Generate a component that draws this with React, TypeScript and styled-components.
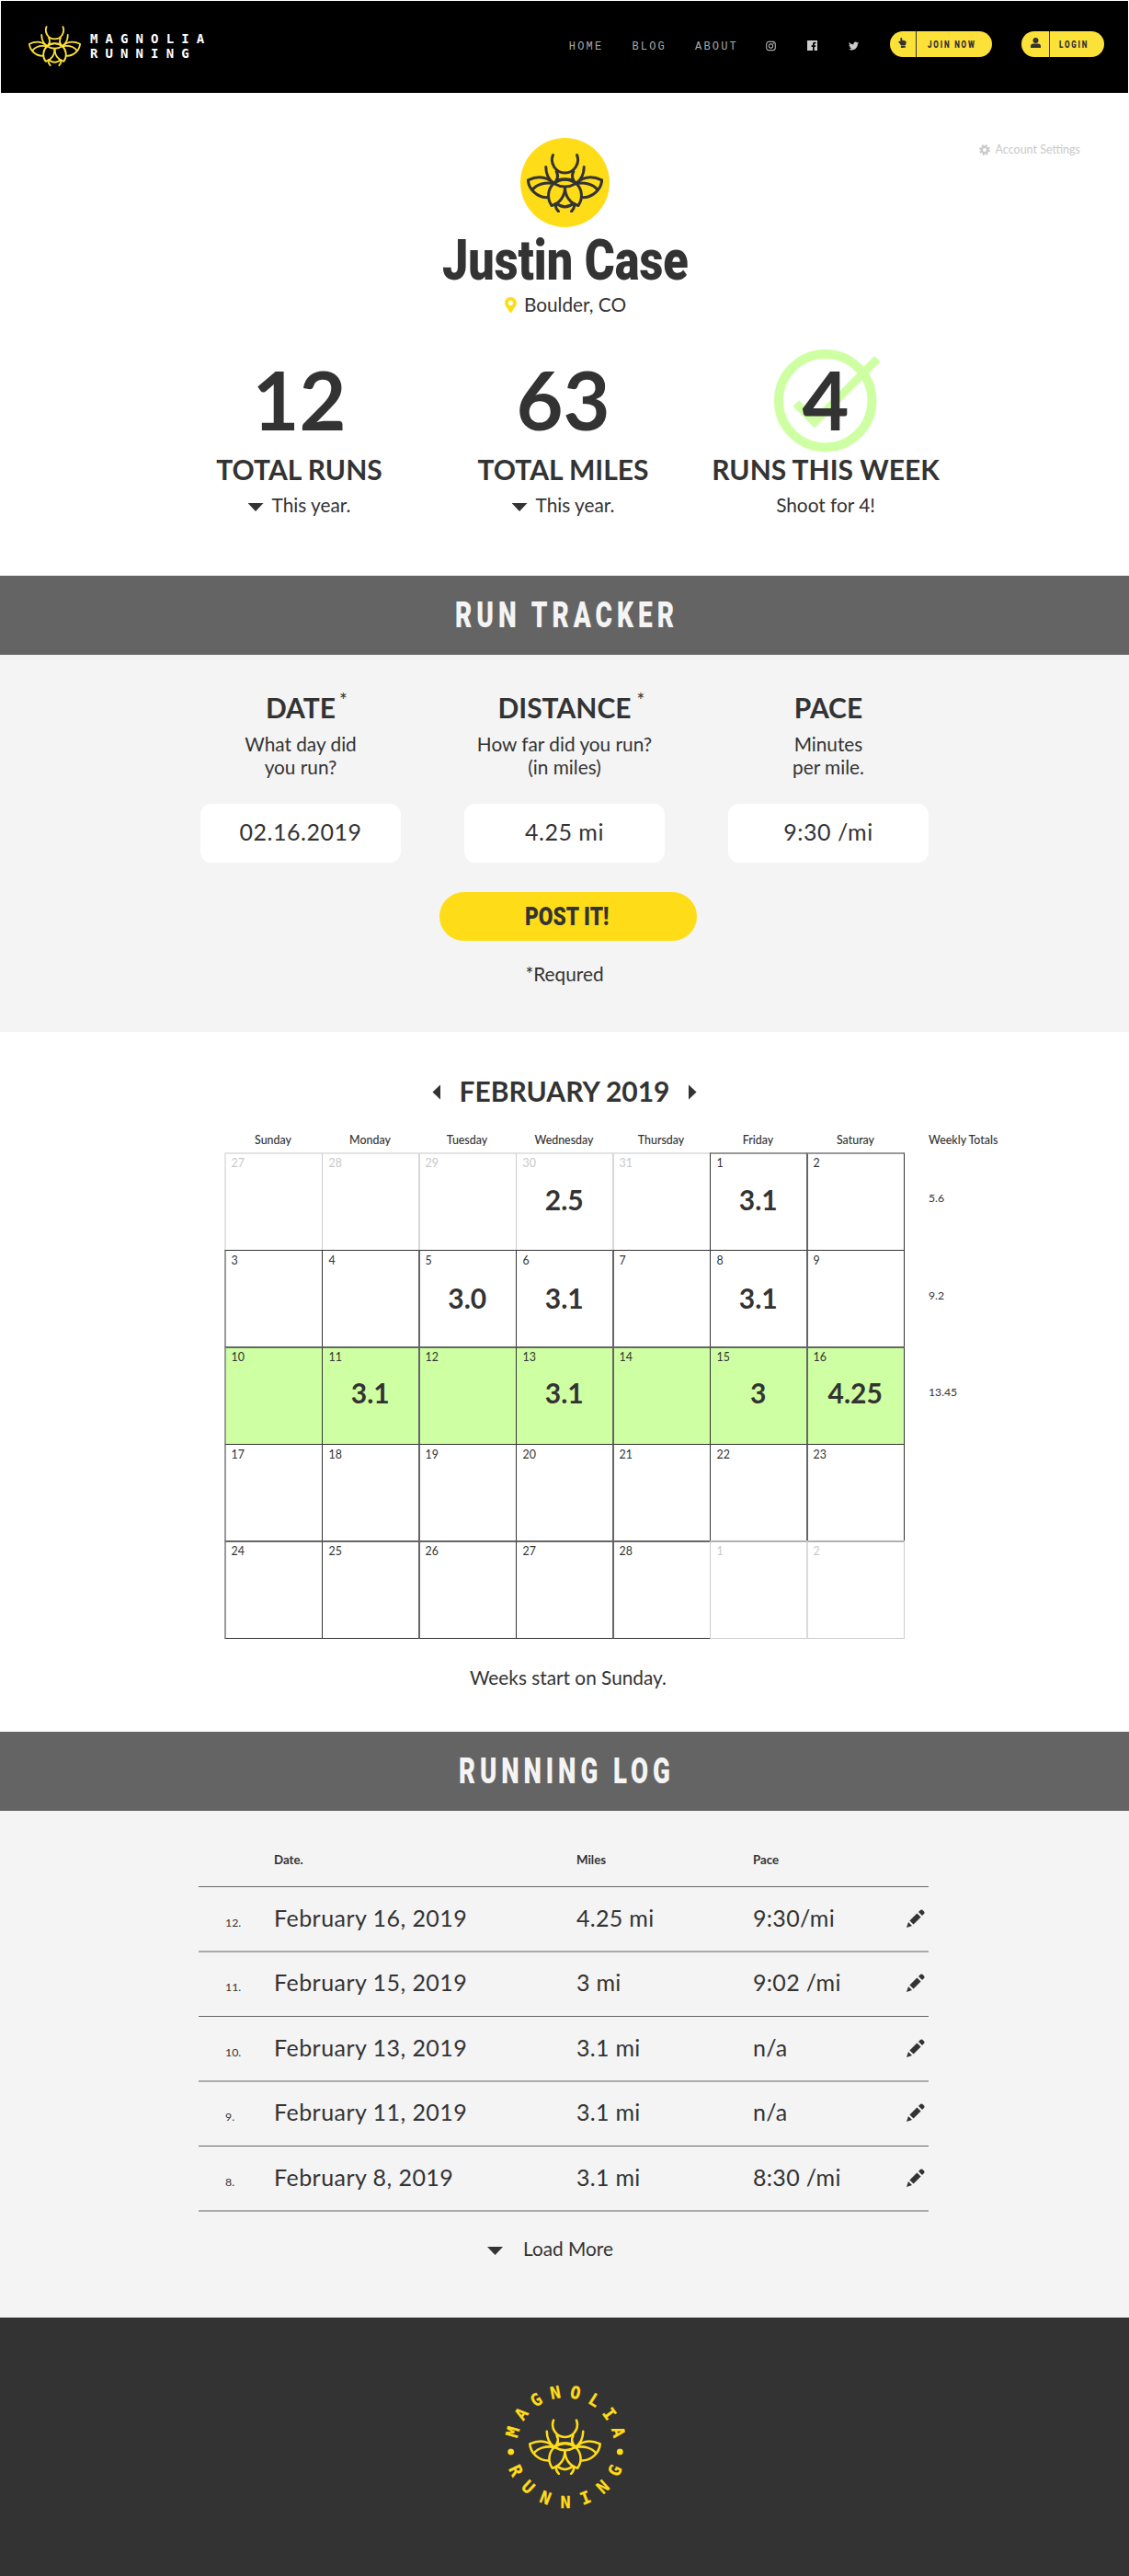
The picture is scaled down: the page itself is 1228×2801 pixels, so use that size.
import React, { useLayoutEffect, useRef, useState } from "react";
import styled, { createGlobalStyle } from "styled-components";
import { FaInstagram, FaTwitter, FaMapMarkerAlt, FaHandPointUp } from "react-icons/fa";

const ink = "#333333";
const yellow = "#ffdc18";
const green = "#ceffa3";
const mist = "#f4f4f4";
const body = "20.8px";

const GlobalStyle = createGlobalStyle`
  *, *::before, *::after { box-sizing: border-box; }
  body {
    margin: 0;
    background: #fff;
    color: ${ink};
    font-family: Lato, "Liberation Sans", sans-serif;
  }
`;

/* ---------- condensed display type ---------- */

const FitBox = styled.span`
  display: inline-block;
  white-space: nowrap;
`;

const FitInner = styled.span`
  display: inline-block;
  transform-origin: 0 50%;
`;

function Condensed({ width, children }: { width: number; children: React.ReactNode }) {
  const ref = useRef<HTMLSpanElement>(null);
  const [scale, setScale] = useState(1);
  useLayoutEffect(() => {
    if (ref.current) setScale(width / ref.current.offsetWidth);
  }, [width]);
  return (
    <FitBox style={{ width }}>
      <FitInner ref={ref} style={{ transform: `scaleX(${scale})` }}>
        {children}
      </FitInner>
    </FitBox>
  );
}

/* ---------- logo ---------- */

function Beetle({ width, color, stroke }: { width: number; color: string; stroke: number }) {
  const half = (
    <>
      <path d="M-28 168C-21 180 -24 195 -36 207" />
      <path d="M-62 153C-62 178 -52 195 -36 207" />
      <path d="M-36 207C-60 184 -90 182 -120 196C-118 225 -92 252 -57 253" />
      <path d="M-36 207C-64 202 -92 209 -106 228" />
      <path d="M-36 207C-56 225 -60 255 -43 279C-16 271 0 248 0 219" />
      <path d="M-31 273C-31 284 -27 292 -21 298" />
    </>
  );
  return (
    <svg
      width={width}
      height={(width * 190) / 248}
      viewBox="-124 110 248 190"
      fill="none"
      stroke={color}
      strokeWidth={stroke}
      strokeLinecap="round"
      strokeLinejoin="round"
    >
      <path d="M-39 115A42 42 0 1 0 39 115" />
      <path d="M-24 196Q0 190 24 196" />
      <path d="M-36 207Q0 182 36 207Q0 228 -36 207" />
      <path d="M-27 272Q0 294 27 272" />
      {half}
      <g transform="scale(-1 1)">{half}</g>
    </svg>
  );
}

/* ---------- header ---------- */

const Header = styled.header`
  margin: 1px 1px 0;
  height: 100px;
  background: #000;
  display: flex;
  align-items: flex-start;
  padding: 27px 26px 0 30px;
`;

const Brand = styled.div`
  display: flex;
  flex: 1;
  gap: 10px;
`;

const BrandName = styled.div`
  margin-top: 5.5px;
  color: #fff;
  font: bold 14px/16.6px "DejaVu Sans Mono", monospace;
  letter-spacing: 8.1px;
`;

const NavLink = styled.a<{ $gap: number }>`
  margin-top: 16px;
  margin-right: ${(p) => p.$gap}px;
  color: #a9a9a9;
  font: 12px/14px "Liberation Mono", monospace;
  letter-spacing: 2.2px;
`;

const Social = styled.a<{ $gap: number }>`
  display: flex;
  margin-top: 16px;
  width: 11px;
  margin-right: ${(p) => p.$gap}px;
  color: #cccccc;
`;

const Pill = styled.a<{ $width: number }>`
  margin-top: 6px;
  width: ${(p) => p.$width}px;
  height: 28px;
  border-radius: 14px;
  background: #fce138;
  color: ${ink};
  display: flex;
  & + & {
    margin-left: 32px;
  }
`;

const PillIcon = styled.span<{ $width: number }>`
  width: ${(p) => p.$width}px;
  border-right: 1px solid ${ink};
  display: flex;
  justify-content: flex-end;
  padding: 7px 9px 0 0;
`;

const PillLabel = styled.span<{ $left: number }>`
  margin-left: ${(p) => p.$left}px;
  font: 900 11.5px/28px Roboto, sans-serif;
  letter-spacing: 2.6px;
`;

/* ---------- profile ---------- */

const Hero = styled.section`
  padding: 49px 53px 65px;
`;

const HeroTop = styled.div`
  display: grid;
  grid-template-columns: 1fr auto 1fr;
`;

const Avatar = styled.div`
  grid-column: 2;
  width: 97px;
  height: 97px;
  border-radius: 50%;
  background: ${yellow};
  display: flex;
  justify-content: center;
  padding-top: 17px;
`;

const Settings = styled.a`
  justify-self: end;
  align-self: start;
  margin-top: 5px;
  display: flex;
  align-items: center;
  gap: 6px;
  color: #c9c9c9;
  font-size: 12.5px;
  line-height: 16px;
`;

const Name = styled.h1`
  margin: 5px 0 0;
  padding-left: 2px;
  text-align: center;
  font: 900 62px/62px Roboto, sans-serif;
  height: 62px;
`;

const Place = styled.p`
  margin: 5px 0 0;
  display: flex;
  justify-content: center;
  gap: 6px;
  font-size: ${body};
  line-height: 24px;
  height: 25px;
  svg {
    margin-top: 4px;
    color: ${yellow};
  }
`;

const Stats = styled.div`
  margin: 46px 0 0 129px;
  display: grid;
  grid-template-columns: 287px 287px 284px;
`;

const Stat = styled.div`
  position: relative;
  text-align: center;
  white-space: nowrap;
`;

const Figure = styled.div`
  position: relative;
  font-size: 88px;
  line-height: 88px;
  font-weight: 700;
`;

const Label = styled.h2`
  margin: 14px 0 0;
  font-size: 30px;
  line-height: 36px;
  font-weight: 700;
`;

const Hint = styled.p`
  margin: 9px 0 0;
  font-size: ${body};
  line-height: 24px;
  display: flex;
  justify-content: center;
  gap: 9px;
`;

const DownArrow = styled.span`
  margin-top: 10px;
  width: 17px;
  height: 9px;
  background: ${ink};
  clip-path: polygon(0 0, 100% 0, 50% 100%);
`;

const GoalMark = styled.svg`
  position: absolute;
  left: 85px;
  top: -11px;
`;

/* ---------- shared section pieces ---------- */

const Band = styled.h2`
  margin: 0;
  padding-left: 5px;
  height: 86px;
  background: #646464;
  color: ${mist};
  text-align: center;
  font: 900 39.4px/85px Roboto, sans-serif;
  letter-spacing: 7px;
`;

const Panel = styled.section<{ $top: number; $bottom: number }>`
  background: ${mist};
  padding: ${(p) => p.$top}px 0 ${(p) => p.$bottom}px;
`;

const Note = styled.p<{ $top: number; $shift?: number }>`
  margin: ${(p) => p.$top}px 0 0 ${(p) => p.$shift ?? 0}px;
  text-align: center;
  font-size: ${body};
  line-height: 24px;
`;

/* ---------- tracker form ---------- */

const Fields = styled.div`
  margin-left: 218px;
  display: grid;
  grid-template-columns: repeat(3, 218px);
  gap: 69px;
`;

const Field = styled.div`
  text-align: center;
`;

const FieldName = styled.h3`
  margin: 0;
  font-size: 30px;
  line-height: 36px;
  font-weight: 700;
`;

const FieldLabel = styled.span`
  position: relative;
`;

const Star = styled.sup<{ $gap: number }>`
  position: absolute;
  left: calc(100% + ${(p) => p.$gap}px);
  top: -2px;
  font-size: ${body};
  line-height: 24px;
  font-weight: 400;
`;

const FieldHelp = styled.p`
  margin: 9px 0 28px;
  font-size: ${body};
  line-height: 25px;
  white-space: pre-line;
`;

const Entry = styled.div`
  height: 64px;
  border-radius: 12px;
  background: #fff;
  font-size: 25px;
  line-height: 61px;
  letter-spacing: 0.5px;
`;

const PostButton = styled.button`
  display: block;
  margin: 32px 0 0 478px;
  width: 280px;
  height: 53px;
  border: 0;
  border-radius: 26.5px;
  padding: 0 3px 0 0;
  background: ${yellow};
  color: ${ink};
  font: 900 28.5px/50px Roboto, sans-serif;
`;

/* ---------- calendar ---------- */

const CalendarSection = styled.section`
  padding: 46px 0 47px;
`;

const Month = styled.div`
  display: flex;
  justify-content: center;
  align-items: center;
  gap: 20px;
`;

const MonthName = styled.h2`
  margin: 0;
  font-size: 30px;
  line-height: 36px;
  font-weight: 700;
`;

const SideArrow = styled.span<{ $next?: boolean }>`
  margin-top: 3px;
  width: 9px;
  height: 17px;
  background: ${ink};
  clip-path: ${(p) => (p.$next ? "polygon(0 0, 100% 50%, 0 100%)" : "polygon(100% 0, 100% 100%, 0 50%)")};
`;

const columns = "106px 105px 106px 105px 106px 105px 107px";

const DayNames = styled.div`
  margin: 28px 0 5px 244px;
  display: grid;
  grid-template-columns: ${columns} 110px;
  font-size: 12.4px;
  line-height: 16px;
  text-align: center;
  font-weight: 500;
`;

const TotalsTitle = styled.span`
  padding-left: 26px;
  text-align: left;
  white-space: nowrap;
`;

const Weeks = styled.div`
  margin-left: 244px;
  display: grid;
  grid-template-columns: ${columns} 110px;
  grid-template-rows: 106px 105px 106px 105px 107px;
`;

type Edge = { w: number; c: string };

const Day = styled.div<{ $left: Edge; $top: Edge; $end: string; $bottom: string; $goal: boolean; $muted: boolean }>`
  position: relative;
  border-style: solid;
  border-width: ${(p) => p.$top.w}px ${(p) => (p.$end ? 1 : 0)}px ${(p) => (p.$bottom ? 1 : 0)}px ${(p) => p.$left.w}px;
  border-color: ${(p) => p.$top.c} ${(p) => p.$end || "transparent"} ${(p) => p.$bottom || "transparent"} ${(p) => p.$left.c};
  background: ${(p) => (p.$goal ? green : "#fff")};
  color: ${(p) => (p.$muted ? "#c9c9c9" : ink)};
  padding: ${(p) => 5 - p.$top.w}px 0 0 ${(p) => 7.5 - p.$left.w}px;
  font-size: 12.4px;
  line-height: 14px;
`;

const Distance = styled.div<{ $top: number }>`
  margin: ${(p) => p.$top}px 7px 0 0;
  text-align: center;
  color: ${ink};
  font-size: 30px;
  line-height: 36px;
  font-weight: 700;
`;

const Total = styled.div`
  padding: 43px 0 0 26px;
  font-size: 12.2px;
  line-height: 14px;
`;

const days = [
  [27, 28, 29, 30, 31, 1, 2],
  [3, 4, 5, 6, 7, 8, 9],
  [10, 11, 12, 13, 14, 15, 16],
  [17, 18, 19, 20, 21, 22, 23],
  [24, 25, 26, 27, 28, 1, 2],
];
const runs: Record<string, string> = {
  "0-3": "2.5", "0-5": "3.1",
  "1-2": "3.0", "1-3": "3.1", "1-5": "3.1",
  "2-1": "3.1", "2-3": "3.1", "2-5": "3", "2-6": "4.25",
};
const totals = ["5.6", "9.2", "13.45", "", ""];
const distanceTop = [14, 15, 13, 14, 14];

function edge(index: number, muted: boolean, overDark: boolean): Edge {
  if (index % 2 === 1) return { w: 1, c: muted ? "#cccccc" : ink };
  if (index === 0) return { w: 2, c: muted ? "#e3e3e3" : "#999999" };
  return { w: 2, c: muted ? (overDark ? "#b2b2b2" : "#d9d9d9") : "#666666" };
}

function Calendar() {
  return (
    <Weeks>
      {days.map((week, r) => (
        <React.Fragment key={r}>
          {week.map((day, c) => {
            const muted = (r === 0 && c < 5) || (r === 4 && c > 4);
            const line = muted ? "#cccccc" : ink;
            const run = runs[`${r}-${c}`];
            return (
              <Day
                key={c}
                $left={edge(c, muted, false)}
                $top={edge(r, muted, true)}
                $end={c === 6 ? line : ""}
                $bottom={r === 4 ? line : ""}
                $goal={r === 2}
                $muted={muted}
              >
                {day}
                {run && <Distance $top={distanceTop[r]}>{run}</Distance>}
              </Day>
            );
          })}
          <Total>{totals[r]}</Total>
        </React.Fragment>
      ))}
    </Weeks>
  );
}

/* ---------- running log ---------- */

const Log = styled.div`
  margin-left: 216px;
  width: 794px;
`;

const logColumns = "53px 329px 192px 168px auto";

const LogHead = styled.div`
  display: grid;
  grid-template-columns: ${logColumns};
  padding-left: 29px;
  height: 37px;
  font-size: 13.3px;
  line-height: 16px;
  font-weight: 700;
`;

const LogRow = styled.div<{ $soft: boolean }>`
  display: grid;
  grid-template-columns: ${logColumns};
  height: ${(p) => (p.$soft ? 71 : 70)}px;
  padding: ${(p) => (p.$soft ? 17 : 18)}px 0 0 29px;
  border-top: ${(p) => (p.$soft ? "2px solid #ababab" : "1px solid #666666")};
  align-items: baseline;
  font-size: 25px;
  line-height: 30px;
  letter-spacing: 0.3px;
`;

const LogEnd = styled.div`
  height: 2px;
  background: #ababab;
`;

const Ordinal = styled.span`
  font-size: 12.3px;
  letter-spacing: 0;
`;

const RunDate = styled.span`
  letter-spacing: 0.45px;
`;

const EditIcon = styled.svg`
  align-self: start;
  margin: 6px 0 0 -1px;
`;

const LoadMore = styled.div`
  margin: 28px 0 0 530px;
  display: flex;
  gap: 22px;
  font-size: ${body};
  line-height: 24px;
`;

const log = [
  ["12.", "February 16, 2019", "4.25 mi", "9:30/mi"],
  ["11.", "February 15, 2019", "3 mi", "9:02 /mi"],
  ["10.", "February 13, 2019", "3.1 mi", "n/a"],
  ["9.", "February 11, 2019", "3.1 mi", "n/a"],
  ["8.", "February 8, 2019", "3.1 mi", "8:30 /mi"],
];

function Pencil() {
  return (
    <EditIcon width="20" height="20" viewBox="0 0 20 20" fill={ink}>
      <path d="M0 20L2 14L6 18Z" />
      <path d="M3.4 12.4L11.4 4.4L15.6 8.6L7.6 16.6Z" />
      <path d="M13 3L15 1Q16.5-.4 18.3 1.7Q20.4 3.5 19 5L17 7Z" />
    </EditIcon>
  );
}

/* ---------- footer ---------- */

const Footer = styled.footer`
  height: 281px;
  background: ${ink};
  display: flex;
  justify-content: center;
  padding: 70px 0 0 1px;
`;

const Seal = styled.div`
  position: relative;
  width: 140px;
  height: 140px;
`;

const SealRing = styled.svg`
  position: absolute;
  inset: 0;
  font: bold 18.5px "DejaVu Sans Mono", monospace;
`;

const SealMark = styled.div`
  position: absolute;
  left: 30.5px;
  top: 40px;
`;

function SealBadge() {
  return (
    <Seal>
      <SealRing
        width="140"
        height="140"
        viewBox="-70 -70 140 140"
        fill={yellow}
        stroke={yellow}
        strokeWidth="0.3"
        textAnchor="middle"
      >
        {"MAGNOLIA".split("").map((ch, i) => (
          <text key={i} y={-53} transform={`rotate(${(i - 3.5) * 21.4})`}>{ch}</text>
        ))}
        {"RUNNING".split("").map((ch, i) => (
          <text key={i} y={66.5} transform={`rotate(${(3 - i) * 21.3})`}>{ch}</text>
        ))}
        <circle cx={-59.3} cy={6} r={3.3} />
        <circle cx={59.3} cy={6} r={3.3} />
      </SealRing>
      <SealMark>
        <Beetle width={79} color={yellow} stroke={8} />
      </SealMark>
    </Seal>
  );
}

/* ---------- page ---------- */

export default function App() {
  return (
    <>
      <GlobalStyle />
      <Header>
        <Brand>
          <Beetle width={57} color="#fce138" stroke={8} />
          <BrandName>
            MAGNOLIA
            <br />
            RUNNING
          </BrandName>
        </Brand>
        <NavLink $gap={31}>HOME</NavLink>
        <NavLink $gap={31}>BLOG</NavLink>
        <NavLink $gap={30}>ABOUT</NavLink>
        <Social $gap={34}><FaInstagram size={12} /></Social>
        <Social $gap={34}>
          <svg width="11" height="11" viewBox="0 0 11 11" fill="currentColor">
            <path d="M0 0H11V11H7.7V6.9H9.1L9.3 5.2H7.7V4.2C7.7 3.7 7.9 3.4 8.5 3.4H9.4V1.9C9.2 1.9 8.7 1.8 8.1 1.8C6.8 1.8 6 2.6 6 4V5.2H4.6V6.9H6V11H0Z" />
          </svg>
        </Social>
        <Social $gap={34}><FaTwitter size={12} /></Social>
        <Pill $width={111}>
          <PillIcon $width={29}><FaHandPointUp size={11} /></PillIcon>
          <PillLabel $left={12}><Condensed width={53}>JOIN NOW</Condensed></PillLabel>
        </Pill>
        <Pill $width={90}>
          <PillIcon $width={31}>
            <svg width="11" height="11" viewBox="0 0 11 11" fill={ink}>
              <circle cx="5.5" cy="3" r="3" />
              <path d="M0 11V9.2C0 7.5 1.2 6.6 2.8 6.6H8.2C9.8 6.6 11 7.5 11 9.2V11Z" />
            </svg>
          </PillIcon>
          <PillLabel $left={10}><Condensed width={32}>LOGIN</Condensed></PillLabel>
        </Pill>
      </Header>

      <Hero>
        <HeroTop>
          <Avatar><Beetle width={83} color={ink} stroke={9} /></Avatar>
          <Settings>
            <svg width="12" height="12" viewBox="-6 -6 12 12">
              <circle r="3.2" fill="none" stroke="#c9c9c9" strokeWidth="2.4" />
              <circle r="4.9" fill="none" stroke="#c9c9c9" strokeWidth="2" strokeDasharray="2.2 1.65" />
            </svg>
            Account Settings
          </Settings>
        </HeroTop>
        <Name><Condensed width={268}>Justin Case</Condensed></Name>
        <Place><FaMapMarkerAlt size={17} />Boulder, CO</Place>
        <Stats>
          <Stat>
            <Figure>12</Figure>
            <Label>TOTAL RUNS</Label>
            <Hint><DownArrow />This year.</Hint>
          </Stat>
          <Stat>
            <Figure>63</Figure>
            <Label>TOTAL MILES</Label>
            <Hint><DownArrow />This year.</Hint>
          </Stat>
          <Stat>
            <GoalMark width="120" height="114" viewBox="841 379 120 114" fill="none" stroke={green}>
              <circle cx="897.7" cy="435.7" r="50.7" strokeWidth="10" />
              <path d="M865.9 438.5L886 459.1L954.4 390.2" strokeWidth="9" />
            </GoalMark>
            <Figure>4</Figure>
            <Label>RUNS THIS WEEK</Label>
            <Hint>Shoot for 4!</Hint>
          </Stat>
        </Stats>
      </Hero>

      <Band><Condensed width={243}>RUN TRACKER</Condensed></Band>
      <Panel $top={39} $bottom={51}>
        <Fields>
          <Field>
            <FieldName><FieldLabel>DATE<Star $gap={4}>*</Star></FieldLabel></FieldName>
            <FieldHelp>{"What day did\nyou run?"}</FieldHelp>
            <Entry>02.16.2019</Entry>
          </Field>
          <Field>
            <FieldName><FieldLabel>DISTANCE<Star $gap={6}>*</Star></FieldLabel></FieldName>
            <FieldHelp>{"How far did you run?\n(in miles)"}</FieldHelp>
            <Entry>4.25 mi</Entry>
          </Field>
          <Field>
            <FieldName>PACE</FieldName>
            <FieldHelp>{"Minutes\nper mile."}</FieldHelp>
            <Entry>9:30 /mi</Entry>
          </Field>
        </Fields>
        <PostButton><Condensed width={91}>POST IT!</Condensed></PostButton>
        <Note $top={24}>*Requred</Note>
      </Panel>

      <CalendarSection>
        <Month>
          <SideArrow />
          <MonthName>FEBRUARY 2019</MonthName>
          <SideArrow $next />
        </Month>
        <DayNames>
          {["Sunday", "Monday", "Tuesday", "Wednesday", "Thursday", "Friday", "Saturay"].map((d) => (
            <span key={d}>{d}</span>
          ))}
          <TotalsTitle>Weekly Totals</TotalsTitle>
        </DayNames>
        <Calendar />
        <Note $top={30} $shift={8}>Weeks start on Sunday.</Note>
      </CalendarSection>

      <Band><Condensed width={235}>RUNNING LOG</Condensed></Band>
      <Panel $top={45} $bottom={63}>
        <Log>
          <LogHead>
            <span />
            <span>Date.</span>
            <span>Miles</span>
            <span>Pace</span>
          </LogHead>
          {log.map(([n, date, miles, pace], i) => (
            <LogRow key={n} $soft={i % 2 === 1}>
              <Ordinal>{n}</Ordinal>
              <RunDate>{date}</RunDate>
              <span>{miles}</span>
              <span>{pace}</span>
              <Pencil />
            </LogRow>
          ))}
          <LogEnd />
        </Log>
        <LoadMore><DownArrow />Load More</LoadMore>
      </Panel>

      <Footer><SealBadge /></Footer>
    </>
  );
}
